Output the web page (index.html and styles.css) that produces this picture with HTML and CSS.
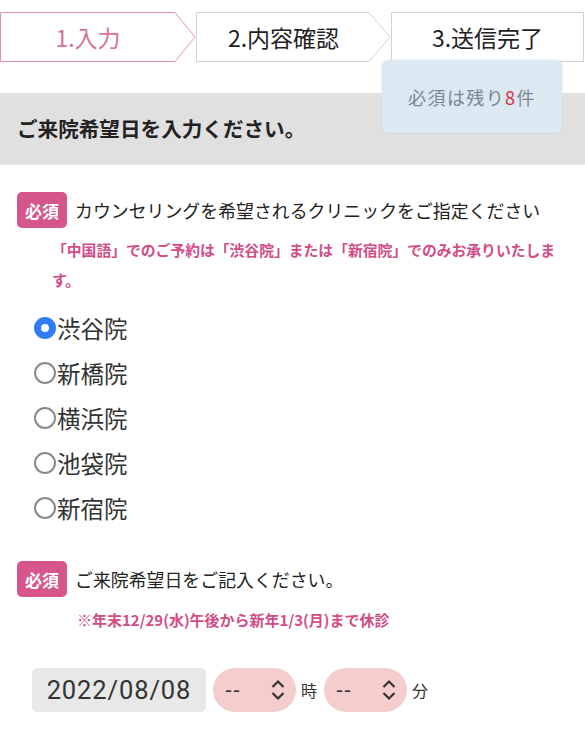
FILE: index.html
```html
<!DOCTYPE html>
<html lang="ja">
<head>
<meta charset="utf-8">
<link rel="stylesheet" href="styles.css">
</head>
<body>
<div class="page">
  <ol class="steps">
    <li class="step step-active">
      <svg class="step-shape" width="196" height="50" viewBox="0 0 196 50"><polygon points="0.5,0.5 175,0.5 195,25 175,49.5 0.5,49.5" fill="#fff" stroke="#e48fae" stroke-width="1"/></svg>
      <span class="step-label">1.入力</span>
    </li>
    <li class="step">
      <svg class="step-shape" width="195" height="50" viewBox="0 0 195 50"><polygon points="0.5,0.5 173,0.5 194,25 173,49.5 0.5,49.5" fill="#fff" stroke="#d2d2d2" stroke-width="1"/></svg>
      <span class="step-label">2.内容確認</span>
    </li>
    <li class="step step-last">
      <svg class="step-shape" width="194" height="50" viewBox="0 0 194 50"><rect x="0.5" y="0.5" width="192" height="49" fill="#fff" stroke="#d2d2d2" stroke-width="1"/></svg>
      <span class="step-label">3.送信完了</span>
    </li>
  </ol>

  <h1 class="band">ご来院希望日を入力ください。</h1>

  <div class="tip">必須は残り<span class="tip-num">8</span>件</div>

  <section class="field field-clinic">
    <div class="field-head">
      <span class="badge">必須</span>
      <span class="question">カウンセリングを希望されるクリニックをご指定ください</span>
    </div>
    <p class="note note-clinic">「中国語」でのご予約は「渋谷院」または「新宿院」でのみお承りいたします。</p>
    <ul class="radios">
      <li><label class="radio"><input type="radio" name="clinic" checked><span>渋谷院</span></label></li>
      <li><label class="radio"><input type="radio" name="clinic"><span>新橋院</span></label></li>
      <li><label class="radio"><input type="radio" name="clinic"><span>横浜院</span></label></li>
      <li><label class="radio"><input type="radio" name="clinic"><span>池袋院</span></label></li>
      <li><label class="radio"><input type="radio" name="clinic"><span>新宿院</span></label></li>
    </ul>
  </section>

  <section class="field field-date">
    <div class="field-head">
      <span class="badge">必須</span>
      <span class="question">ご来院希望日をご記入ください。</span>
    </div>
    <p class="note note-date">※年末12/29(水)午後から新年1/3(月)まで休診</p>
    <div class="date-row">
      <div class="date-box">2022/08/08</div>
      <div class="select">
        <span class="select-val">--</span>
        <svg class="select-arrow" width="16" height="24" viewBox="0 0 16 24"><polyline points="2.5,9 8,3.5 13.5,9" fill="none" stroke="#333" stroke-width="2.2"/><polyline points="2.5,15 8,20.5 13.5,15" fill="none" stroke="#333" stroke-width="2.2"/></svg>
      </div>
      <span class="unit">時</span>
      <div class="select">
        <span class="select-val">--</span>
        <svg class="select-arrow" width="16" height="24" viewBox="0 0 16 24"><polyline points="2.5,9 8,3.5 13.5,9" fill="none" stroke="#333" stroke-width="2.2"/><polyline points="2.5,15 8,20.5 13.5,15" fill="none" stroke="#333" stroke-width="2.2"/></svg>
      </div>
      <span class="unit">分</span>
    </div>
  </section>
</div>
</body>
</html>
```

FILE: styles.css
```css
* { box-sizing: border-box; }
html, body { margin: 0; padding: 0; background: #fff; }
body {
  font-family: "Noto Sans CJK JP", "Noto Sans", sans-serif;
  color: #222;
}
.page {
  position: relative;
  width: 585px;
  height: 730px;
  overflow: hidden;
}

/* steps */
.steps {
  list-style: none;
  margin: 12px 0 0;
  padding: 0;
  display: flex;
  height: 50px;
}
.step {
  position: relative;
  width: 195px;
  height: 50px;
  display: flex;
  align-items: center;
}
.step-active { width: 196px; }
.step-last { width: 194px; }
.step-shape { position: absolute; left: 0; top: 0; }
.step-label {
  position: relative;
  width: 175px;
  text-align: center;
  font-size: 23px;
  line-height: 50px;
  color: #222;
}
.step-active .step-label { color: #d8709a; width: 176px; }
.step-last .step-label { width: 193px; }

/* band */
.band {
  margin: 31px 0 0;
  height: 72px;
  background: #e0e0e0;
  font-size: 20.6px;
  font-weight: 700;
  line-height: 70px;
  padding-left: 17px;
  color: #222;
  border-bottom: 1px dashed #ececec;
}

/* tooltip */
.tip {
  position: absolute;
  left: 382px;
  top: 60px;
  width: 180px;
  height: 73px;
  background: #dde9f2;
  border-radius: 6px;
  box-shadow: 0 0 2px rgba(180, 200, 215, 0.6);
  color: #7b8893;
  font-size: 18px;
  letter-spacing: 1.4px;
  text-align: center;
  padding-top: 25px;
  line-height: 24px;
}
.tip-num { color: #d9323f; }

/* fields */
.field-head {
  display: flex;
  align-items: center;
  gap: 8px;
  padding-left: 17px;
}
.badge {
  width: 50px;
  height: 36px;
  border-radius: 5px;
  background: #d6558b;
  color: #fff;
  font-size: 17px;
  font-weight: 700;
  display: flex;
  align-items: center;
  justify-content: center;
}
.question {
  font-size: 17.9px;
  color: #222;
}
.note {
  margin: 0;
  color: #d24c86;
  font-weight: 700;
}
.field-clinic { margin-top: 27px; }
.note-clinic {
  font-size: 14.8px;
  line-height: 30px;
  padding-left: 52px;
  padding-right: 18px;
  margin-top: 7px;
}
.radios {
  list-style: none;
  margin: 17px 0 0;
  padding: 0 0 0 34px;
  display: flex;
  flex-direction: column;
  gap: 13px;
}
.radio {
  display: flex;
  align-items: center;
  height: 32px;
  font-size: 23.5px;
  color: #333;
}
.radio input {
  appearance: none;
  -webkit-appearance: none;
  margin: 0 1px 0 0;
  width: 22px;
  height: 22px;
  border-radius: 50%;
  border: 2px solid #8a8a8a;
  background: #fff;
}
.radio input:checked {
  border: 7px solid #2f7cf6;
}

.field-date { margin-top: 37px; }
.note-date {
  font-size: 15px;
  line-height: 30px;
  padding-left: 77px;
  margin-top: 8px;
}
.date-row {
  margin-top: 33px;
  padding-left: 32px;
  display: flex;
  align-items: center;
}
.date-box {
  width: 174px;
  height: 44px;
  border-radius: 5px;
  background: #e8e8e8;
  font-family: "Roboto", "Liberation Sans", sans-serif;
  font-size: 25.5px;
  letter-spacing: 0.9px;
  color: #333;
  display: flex;
  align-items: center;
  justify-content: center;
}
.select {
  margin-left: 7px;
  width: 83px;
  height: 44px;
  border-radius: 22px;
  background: #f5cdcd;
  display: flex;
  align-items: center;
  justify-content: space-between;
  padding: 0 10px 0 12px;
}
.select-val {
  font-family: "Liberation Sans", sans-serif;
  font-size: 21px;
  letter-spacing: 1px;
  color: #333;
}
.unit {
  margin-left: 5px;
  font-size: 16px;
  color: #333;
}
```
